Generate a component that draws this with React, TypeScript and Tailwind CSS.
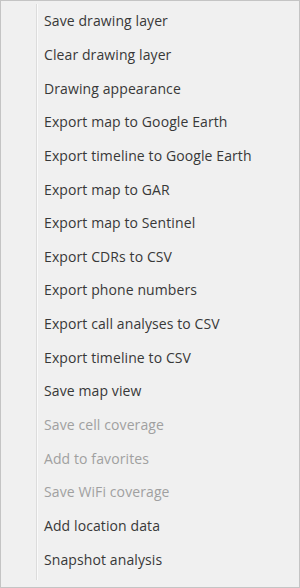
const items: { label: string; disabled?: boolean }[] = [
  { label: 'Save drawing layer' },
  { label: 'Clear drawing layer' },
  { label: 'Drawing appearance' },
  { label: 'Export map to Google Earth' },
  { label: 'Export timeline to Google Earth' },
  { label: 'Export map to GAR' },
  { label: 'Export map to Sentinel' },
  { label: 'Export CDRs to CSV' },
  { label: 'Export phone numbers' },
  { label: 'Export call analyses to CSV' },
  { label: 'Export timeline to CSV' },
  { label: 'Save map view' },
  { label: 'Save cell coverage', disabled: true },
  { label: 'Add to favorites', disabled: true },
  { label: 'Save WiFi coverage', disabled: true },
  { label: 'Add location data' },
  { label: 'Snapshot analysis' },
];

export default function App() {
  return (
    <div
      className="w-[300px] h-[588px] bg-[#f0f0f0] border border-[#c4c4c4] pl-[35px] pr-[2px] pt-[3px] pb-[7px]"
      style={{ fontFamily: '"Open Sans", "Liberation Sans", sans-serif' }}
    >
      <ul className="h-full border-l border-[#dcdcdc] shadow-[1px_0_0_#fafafa_inset]">
        {items.map((item) => (
          <li
            key={item.label}
            className={`h-[33.65px] flex items-center pl-[7px] text-[14px] tracking-[0.1px] ${
              item.disabled ? 'text-[#a0a0a0]' : 'text-[#383838]'
            }`}
          >
            {item.label}
          </li>
        ))}
      </ul>
    </div>
  );
}
